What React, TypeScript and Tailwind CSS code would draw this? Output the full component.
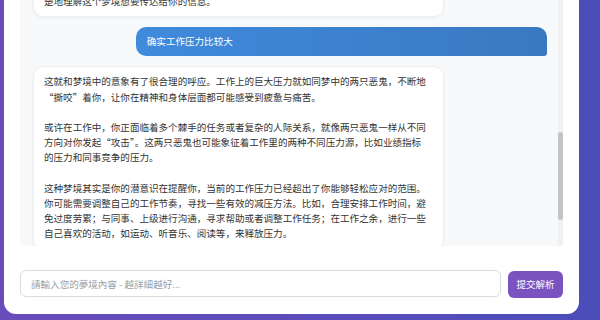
import React from "react";

const p1 = [
  "这就和梦境中的意象有了很合理的呼应。工作上的巨大压力就如同梦中的两只恶鬼，不断地",
  "“撕咬”着你，让你在精神和身体层面都可能感受到疲惫与痛苦。",
];
const p2 = [
  "或许在工作中，你正面临着多个棘手的任务或者复杂的人际关系，就像两只恶鬼一样从不同",
  "方向对你发起“攻击”。这两只恶鬼也可能象征着工作里的两种不同压力源，比如业绩指标",
  "的压力和同事竞争的压力。",
];
const p3 = [
  "这种梦境其实是你的潜意识在提醒你，当前的工作压力已经超出了你能够轻松应对的范围。",
  "你可能需要调整自己的工作节奏，寻找一些有效的减压方法。比如，合理安排工作时间，避",
  "免过度劳累；与同事、上级进行沟通，寻求帮助或者调整工作任务；在工作之余，进行一些",
  "自己喜欢的活动，如运动、听音乐、阅读等，来释放压力。",
];

function Para({ lines }: { lines: string[] }) {
  return (
    <p className="whitespace-nowrap">
      {lines.map((l, i) => (
        <span key={i} className="block">
          {l}
        </span>
      ))}
    </p>
  );
}

export default function App() {
  return (
    <div className="w-[600px] h-[320px] overflow-hidden bg-linear-to-r from-[#6a4bbb] to-[#4b4db9] font-['Noto_Sans_CJK_SC',sans-serif]">
      <div className="ml-[4px] w-[575px] h-[314px] bg-white rounded-b-[12px] px-[16px] pb-[16px] flex flex-col">
        <div className="h-[247px] bg-[#f8f9fa] flex overflow-hidden rounded-b-[3px]">
          <div className="flex-1 overflow-hidden pl-[13px] pr-[11px]">
            <div className="-mt-[14px] flex flex-col gap-[10px] text-[9.55px] leading-[15.2px] text-[#333]">
              <div className="w-[80%] bg-white rounded-[10px] border border-[#eceef2] shadow-[0_1px_3px_rgba(0,0,0,0.05)] px-[10px] py-[7px]">
                <p className="whitespace-nowrap">楚地理解这个梦境想要传达给你的信息。</p>
              </div>
              <div className="w-[80%] self-end bg-linear-to-r from-[#3f8bdc] to-[#3a79c2] text-white rounded-[10px] rounded-br-[3px] px-[11px] py-[7px]">
                确实工作压力比较大
              </div>
              <div className="w-[80%] bg-white rounded-[10px] border border-[#eceef2] shadow-[0_1px_3px_rgba(0,0,0,0.05)] px-[10px] py-[7px] flex flex-col gap-[15.2px]">
                <Para lines={p1} />
                <Para lines={p2} />
                <Para lines={p3} />
              </div>
            </div>
          </div>
          <div className="w-[5px] bg-[#f1f1f1]">
            <div className="mt-[132px] h-[88px] bg-[#c4c4c4] rounded-full" />
          </div>
        </div>
        <div className="mt-[24px] flex gap-[7px]">
          <input
            className="flex-1 h-[27px] rounded-[6px] border border-[#d9dce1] bg-white pl-[10px] text-[9.55px] text-[#333] placeholder:text-[#9aa0a6] outline-none"
            placeholder="請輸入您的夢境內容 - 越詳細越好..."
          />
          <button className="w-[55px] h-[27px] mt-[1px] rounded-[6px] bg-[#7a53c1] text-white text-[9.55px]">
            提交解析
          </button>
        </div>
      </div>
    </div>
  );
}
